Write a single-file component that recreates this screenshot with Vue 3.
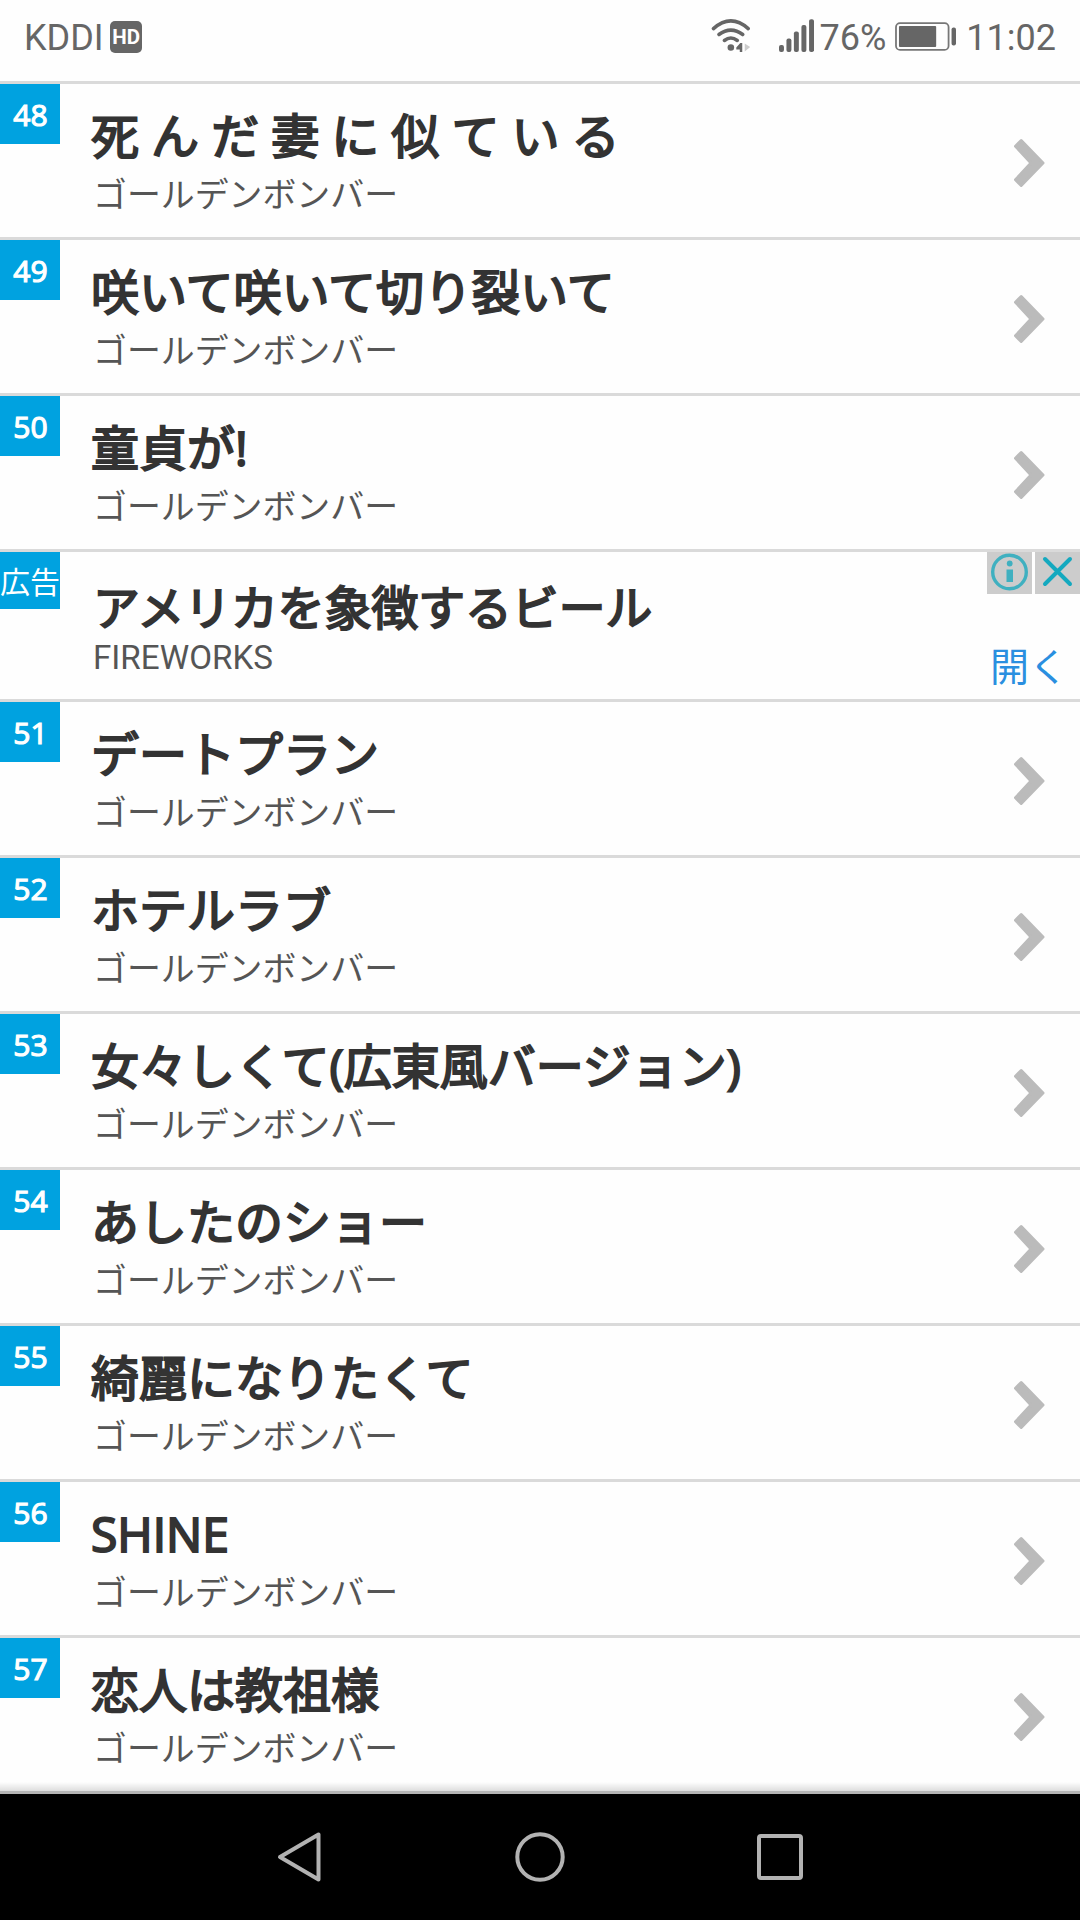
<script setup>
import { ref } from 'vue';

const artista = 'ゴールデンボンバー';

const antes = ref([
  { num: 48, title: '死 ん だ 妻 に 似 て い る' },
  { num: 49, title: '咲いて咲いて切り裂いて' },
  { num: 50, title: '童貞が!' }
]);

const despues = ref([
  { num: 51, title: 'デートプラン' },
  { num: 52, title: 'ホテルラブ' },
  { num: 53, title: '女々しくて(広東風バージョン)' },
  { num: 54, title: 'あしたのショー' },
  { num: 55, title: '綺麗になりたくて' },
  { num: 56, title: 'SHINE' },
  { num: 57, title: '恋人は教祖様' }
]);

const bloques = ref([
  { id: 'antes', items: antes.value, ad: true },
  { id: 'despues', items: despues.value, ad: false }
]);
</script>

<template>
  <div class="screen">
    <header class="status">
      <span class="carrier">KDDI</span>
      <span class="hd">HD</span>
      <svg class="wifi" width="42" height="36" viewBox="0 0 42 36">
        <g fill="none" stroke="#666" stroke-width="3.6" stroke-linecap="round">
          <path d="M2.5 10.5Q20 -5 37.5 10.5" />
          <path d="M8 16.5Q20 7.5 32 16.5" />
          <path d="M13.5 22.5Q20 17.5 26.5 22.5" />
        </g>
        <circle cx="20" cy="29.5" r="3.3" fill="#666" />
        <path d="M31.500 25V34H29V31.500H25.500V29.500L29.500 25Z" fill="#666" />
        <path d="M34 25.5L39.5 29L34 33.5Z" fill="#ccc" />
      </svg>
      <svg class="signal" width="36" height="36" viewBox="0 0 36 36">
        <g fill="#666">
          <rect x="0" y="27" width="5" height="7" rx="2" />
          <rect x="7.5" y="20.5" width="5" height="13.5" rx="2" />
          <rect x="15" y="13.5" width="5" height="20.5" rx="2" />
          <rect x="22.6" y="7" width="5" height="27" rx="2" />
          <rect x="30.3" y="1" width="5" height="33" rx="2" />
        </g>
      </svg>
      <span class="percent">76%</span>
      <svg class="battery" width="62" height="30" viewBox="0 0 62 30">
        <rect x="1" y="1" width="53" height="27" rx="4" fill="none" stroke="#777" stroke-width="1.8" />
        <rect x="4" y="4" width="37.5" height="21" rx="1" fill="#666" />
        <rect x="57" y="5.5" width="4.5" height="18" rx="2" fill="#666" />
      </svg>
      <span class="clock">11:02</span>
    </header>

    <main class="list">
      <template v-for="bloque in bloques" :key="bloque.id">
        <article v-for="item in bloque.items" :key="item.num" class="row">
          <div class="badge">{{ item.num }}</div>
          <div class="info">
            <h3 class="title">{{ item.title }}</h3>
            <p class="artist">{{ artista }}</p>
          </div>
          <svg class="chevron" width="34" height="52" viewBox="0 0 34 52">
            <path
              d="M9.2 3.5L31 26L9.2 48.5L3.5 42.8L19 26L3.5 9.2Z"
              fill="#bbb"
              stroke="#bbb"
              stroke-width="3"
              stroke-linejoin="round"
            />
          </svg>
        </article>

        <article v-if="bloque.ad" class="row row-ad">
          <div class="badge badge-ad">広告</div>
          <div class="info">
            <h3 class="title">アメリカを象徴するビール</h3>
            <p class="sponsor">FIREWORKS</p>
          </div>
          <div class="side">
            <div class="choices">
              <svg width="45" height="42" viewBox="0 0 45 42">
                <rect width="45" height="42" fill="#ccc" />
                <circle cx="22.5" cy="20" r="16.8" fill="none" stroke="#3fb0c0" stroke-width="3.4" />
                <rect x="19.5" y="17.5" width="6.5" height="12.5" fill="#3fb0c0" />
                <circle cx="22.7" cy="11.5" r="2.9" fill="#3fb0c0" />
              </svg>
              <svg width="45" height="42" viewBox="0 0 45 42">
                <rect width="45" height="42" fill="#ccc" />
                <path d="M10 7L35 32M35 7L10 32" stroke="#14a9bf" stroke-width="4" stroke-linecap="round" />
              </svg>
            </div>
            <a class="open">開く</a>
          </div>
        </article>
      </template>
    </main>

    <nav class="navbar">
      <svg width="52" height="52" viewBox="0 0 52 52">
        <path d="M44.5 3.5V48.5L6 26Z" />
      </svg>
      <svg width="52" height="52" viewBox="0 0 52 52">
        <circle cx="26" cy="26" r="22.7" />
      </svg>
      <svg width="52" height="52" viewBox="0 0 52 52">
        <rect x="5" y="5" width="42" height="42" rx="2" />
      </svg>
    </nav>
  </div>
</template>

<style>
body {
  background: #fff;
}
</style>

<style scoped>
.screen {
  width: 1080px;
  height: 1920px;
  display: flex;
  flex-direction: column;
  overflow: hidden;
  background: #fefefe;
  font-family: 'Open Sans', 'Noto Sans CJK JP', sans-serif;
}

/* ===== STATUS BAR ===== */
.status {
  height: 81px;
  flex: none;
  display: flex;
  align-items: flex-start;
  padding: 0 24px;
  box-sizing: border-box;
  font-family: Roboto, sans-serif;
  font-size: 36px;
  line-height: 76px;
  color: #666;
}

.carrier {
  width: 87px;
}

.hd {
  width: 32px;
  height: 32px;
  margin-top: 21px;
  border-radius: 5px;
  background: #666;
  color: #fff;
  font-size: 20.5px;
  font-weight: 700;
  line-height: 32px;
  text-align: center;
}

.wifi {
  margin: 18px 0 0 569px;
}

.signal {
  margin: 18px 0 0 26px;
}

.percent {
  width: 76px;
  margin-left: 5px;
  white-space: nowrap;
}

.battery {
  margin-top: 22px;
}

.clock {
  margin-left: 10px;
  white-space: nowrap;
}

/* ===== LISTA ===== */
.list {
  height: 1713px;
  flex: none;
  position: relative;
}

.list::after {
  content: '';
  position: absolute;
  left: 0;
  right: 0;
  bottom: 0;
  height: 12px;
  box-sizing: border-box;
  border-bottom: 3px solid #b5b5b5;
  background: linear-gradient(rgba(0, 0, 0, 0), rgba(0, 0, 0, 0.13));
}

.row {
  height: 156px;
  box-sizing: border-box;
  border-top: 3px solid #dadada;
  display: flex;
  align-items: flex-start;
}

.badge {
  width: 60px;
  height: 60px;
  flex: none;
  background: #00a2e0;
  color: #fff;
  font-size: 30px;
  line-height: 62px;
  text-align: center;
  text-indent: 1px;
  -webkit-text-stroke: 1.2px #fff;
}

.info {
  flex: 1;
  padding: 18px 0 0 31px;
}

.title {
  margin: 0;
  font-size: 48px;
  font-weight: 400;
  line-height: 68px;
  word-spacing: -0.4px;
  color: #333;
  white-space: nowrap;
  -webkit-text-stroke: 2px #333;
}

.artist {
  margin: 1px 0 0 2px;
  font-size: 33.9px;
  line-height: 46px;
  color: #555;
}

.chevron {
  margin: 53px 34px 0 0;
}

/* ===== ANUNCIO ===== */
.row-ad {
  height: 150px;
}

.badge-ad {
  height: 57px;
  line-height: 60px;
  white-space: nowrap;
  text-indent: 0;
  -webkit-text-stroke: 0;
}

.row-ad .info {
  padding: 21px 0 0 33px;
}

.row-ad .title {
  font-size: 46.8px;
}

.sponsor {
  margin: -2px 0 0;
  font-family: Roboto, sans-serif;
  font-size: 33.2px;
  line-height: 38px;
  color: #555;
}

.side {
  height: 147px;
  display: flex;
  flex-direction: column;
  justify-content: space-between;
  align-items: flex-end;
}

.choices {
  display: flex;
  gap: 3px;
}

.choices svg {
  display: block;
}

.open {
  margin-right: 12px;
  font-size: 39px;
  line-height: 66px;
  color: #2a8fe0;
}

/* ===== NAVEGACION ===== */
.navbar {
  flex: 1;
  display: flex;
  justify-content: center;
  align-items: center;
  gap: 188px;
  background: #000;
}

.navbar svg {
  fill: none;
  stroke: #b2b2b2;
  stroke-width: 4;
  stroke-linejoin: round;
}
</style>
